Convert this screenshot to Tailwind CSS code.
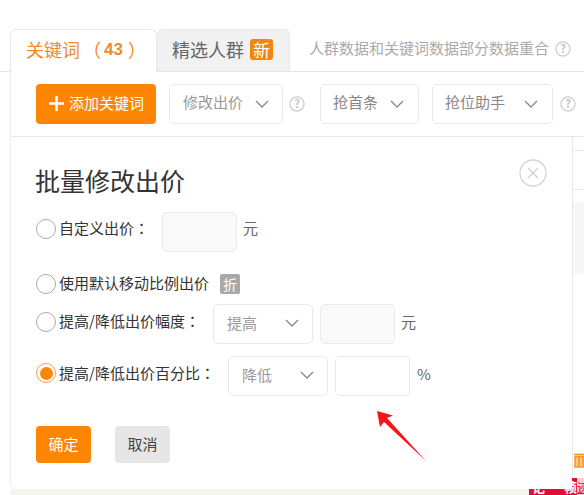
<!DOCTYPE html>
<html>
<head>
<meta charset="utf-8">
<script src="https://cdn.jsdelivr.net/npm/@tailwindcss/browser@4"></script>
</head>
<body class="bg-white">
<div class="relative w-[584px] h-[495px] overflow-hidden bg-white font-['Noto_Sans_CJK_SC','Liberation_Sans',sans-serif] text-[15px] text-[#333]">

    <!-- tabs -->
    <div class="flex items-stretch h-[72px] pt-[29px] pl-[10px] border-b border-[#e4e4e4]">
        <div class="w-[147px] h-[43px] -mb-px flex items-center pl-[15px] pb-[3px] bg-white border border-b-0 border-[#e8e8e8] rounded-t-[6px] text-[18px] text-[#f08a28] whitespace-nowrap">关键词<span class="ml-[3px]">（</span><span class="font-['Liberation_Sans'] font-bold ml-[3px] text-[17px]">43</span><span class="ml-[5px]">）</span></div>
        <div class="w-[133px] flex items-center pl-[15px] pb-[2px] bg-[#f1f1f1] border-t border-r border-[#e8e8e8] rounded-t-[6px] text-[18px] text-[#666]">
            精选人群
            <span class="ml-[6px] w-[23px] h-[21px] flex items-center justify-center rounded-[3px] bg-[#f5860b] text-white text-[17px] leading-none">新</span>
        </div>
        <div class="flex items-center gap-[6px] pl-[19px] pb-[3px] text-[#aaa] whitespace-nowrap">
            人群数据和关键词数据部分数据重合
            <svg class="w-[16px] h-[16px] shrink-0" viewBox="0 0 16 16"><circle cx="8" cy="8" r="7" fill="none" stroke="#d2d2d2" stroke-width="1.5"/><text x="8" y="12" text-anchor="middle" font-size="11" fill="#c4c4c4" font-weight="700">?</text></svg>
        </div>
    </div>

    <!-- toolbar -->
    <div class="flex items-center h-[65px] ml-[10px] pl-[25px] border-l border-[#eee] border-b border-b-[#e8e8e8]">
        <button class="w-[120px] h-[40px] flex items-center justify-center gap-[5px] pb-[1px] pl-[1px] rounded-[4px] bg-[#ff8605] text-white">
            <svg class="w-[15px] h-[15px]" viewBox="0 0 14 14"><path d="M5.8 0h2.4v5.8H14v2.4H8.2V14H5.8V8.2H0V5.8h5.8z" fill="#fff"/></svg>
            添加关键词
        </button>
        <div class="ml-[13px] w-[114px] h-[40px] flex items-center justify-between pl-[13px] pr-[13px] pb-[3px] border border-[#e8e8e8] rounded-[5px] text-[#999]">
            修改出价
            <svg class="w-[14px] h-[8px] mt-[3px]" viewBox="0 0 14 8"><path d="M1 1l6 6 6-6" fill="none" stroke="#888" stroke-width="1.3"/></svg>
        </div>
        <svg class="ml-[6px] w-[16px] h-[16px]" viewBox="0 0 16 16"><circle cx="8" cy="8" r="7" fill="none" stroke="#d2d2d2" stroke-width="1.5"/><text x="8" y="12" text-anchor="middle" font-size="11" fill="#c4c4c4" font-weight="700">?</text></svg>
        <div class="ml-[15px] w-[99px] h-[40px] flex items-center justify-between pl-[12px] pr-[14px] pb-[3px] border border-[#e8e8e8] rounded-[5px] text-[#888]">
            抢首条
            <svg class="w-[14px] h-[8px] mt-[3px]" viewBox="0 0 14 8"><path d="M1 1l6 6 6-6" fill="none" stroke="#888" stroke-width="1.3"/></svg>
        </div>
        <div class="ml-[13px] w-[121px] h-[40px] flex items-center justify-between pl-[12px] pr-[14px] pb-[3px] border border-[#e8e8e8] rounded-[5px] text-[#888]">
            抢位助手
            <svg class="w-[14px] h-[8px] mt-[3px]" viewBox="0 0 14 8"><path d="M1 1l6 6 6-6" fill="none" stroke="#888" stroke-width="1.3"/></svg>
        </div>
        <svg class="ml-[7px] w-[16px] h-[16px]" viewBox="0 0 16 16"><circle cx="8" cy="8" r="7" fill="none" stroke="#d2d2d2" stroke-width="1.5"/><text x="8" y="12" text-anchor="middle" font-size="11" fill="#c4c4c4" font-weight="700">?</text></svg>
    </div>

    <!-- table behind the dialog -->
    <div class="absolute left-[572px] top-[150px] w-[12px] h-px bg-[#e8e8e8]"></div>
    <div class="absolute left-[572px] top-[189px] w-[12px] h-px bg-[#e8e8e8]"></div>
    <div class="absolute left-[573px] top-[202px] w-[11px] h-[72px] bg-[#f7f7f7]"></div>
    <div class="absolute left-[572px] top-[137px] w-px h-[352px] bg-[#e8e8e8]"></div>
    <svg class="absolute left-[574px] top-[452px] w-[14px] h-[16px]" viewBox="0 0 14 16"><path d="M0 2.5h14" fill="none" stroke="#f5921e" stroke-width="1.6"/><path d="M1 4.5h12V15H1z" fill="#fbc88a" stroke="#f5921e" stroke-width="1.4"/><path d="M5 5v9M9 5v9" stroke="#f5921e" stroke-width="1.5"/></svg>
    <div class="absolute left-[529px] top-[478px] w-[55px] h-[17px] bg-[#e8093a] flex items-start justify-between pl-[3px] text-white text-[13px] leading-[17px] font-bold overflow-hidden whitespace-nowrap">
        <span>记 · 帧</span><span class="bg-white/80 text-[#e8093a] font-normal underline">迹</span>
    </div>
    <div class="absolute left-[10px] top-[489px] w-[519px] h-[6px] bg-[#f7f3ee]"></div>

    <!-- dialog -->
    <div class="absolute left-[10px] top-[137px] w-[562px] h-[352px] bg-white border-l border-[#eee] rounded-bl-[6px] rounded-tr-[8px] pl-[25px] pt-[26px] text-[#333]">
        <div class="text-[25px] leading-[34px] -ml-px text-[#333]">批量修改出价</div>

        <button class="absolute left-[508px] top-[22px] w-[28px] h-[28px]">
            <svg class="w-[28px] h-[28px]" viewBox="0 0 28 28"><circle cx="14" cy="14" r="13" fill="none" stroke="#d4d4d4" stroke-width="1.3"/><path d="M9 9l10 10M19 9L9 19" stroke="#cfcfcf" stroke-width="1.2"/></svg>
        </button>

        <div class="flex items-center h-[40px] mt-[15px]">
            <span class="w-[20px] h-[20px] mb-[6px] rounded-full border border-[#aaa]"></span>
            <span class="ml-[3px] w-[103px] mb-[7px]">自定义出价<span class="font-['Noto_Sans_CJK_TC']">：</span></span>
            <span class="w-[75px] h-[40px] rounded-[5px] border border-[#eaeaea] bg-[#f9f9f9]"></span>
            <span class="ml-[6px] mb-[7px] text-[#666]">元</span>
        </div>

        <div class="flex items-center h-[20px] mt-[22px]">
            <span class="w-[20px] h-[20px] rounded-full border border-[#aaa]"></span>
            <span class="ml-[3px] mb-[2px]">使用默认移动比例出价</span>
            <span class="ml-[11px] w-[20px] h-[20px] flex items-center justify-center rounded-[2px] bg-[#a8a8a8] text-white text-[14px]">折</span>
        </div>

        <div class="flex items-center h-[40px] mt-[10px]">
            <span class="w-[20px] h-[20px] mb-[4px] rounded-full border border-[#aaa]"></span>
            <span class="ml-[3px] w-[154px] mb-[5px]">提高/降低出价幅度<span class="font-['Noto_Sans_CJK_TC']">：</span></span>
            <div class="w-[100px] h-[40px] flex items-center justify-between pl-[13px] pr-[13px] pb-[2px] border border-[#eaeaea] rounded-[5px] text-[#999]">
                提高
                <svg class="w-[14px] h-[8px]" viewBox="0 0 14 8"><path d="M1 1l6 6 6-6" fill="none" stroke="#888" stroke-width="1.3"/></svg>
            </div>
            <span class="ml-[7px] w-[75px] h-[40px] rounded-[5px] border border-[#eaeaea] bg-[#f9f9f9]"></span>
            <span class="ml-[6px] mb-[3px] text-[#666]">元</span>
        </div>

        <div class="flex items-center h-[40px] mt-[12px]">
            <span class="w-[20px] h-[20px] mb-[6px] rounded-full border border-[#f5a04a] flex items-center justify-center">
                <span class="w-[13px] h-[13px] rounded-full bg-[#ff8605]"></span>
            </span>
            <span class="ml-[3px] w-[169px] mb-[5px]">提高/降低出价百分比<span class="font-['Noto_Sans_CJK_TC']">：</span></span>
            <div class="w-[100px] h-[40px] flex items-center justify-between pl-[13px] pr-[13px] pb-[2px] border border-[#eaeaea] rounded-[5px] text-[#999]">
                降低
                <svg class="w-[14px] h-[8px]" viewBox="0 0 14 8"><path d="M1 1l6 6 6-6" fill="none" stroke="#888" stroke-width="1.3"/></svg>
            </div>
            <span class="ml-[7px] w-[75px] h-[40px] rounded-[5px] border border-[#eaeaea] bg-white"></span>
            <span class="ml-[7px] mb-[4px] text-[#666]">%</span>
        </div>

        <div class="flex items-center gap-[24px] mt-[30px]">
            <button class="w-[55px] h-[37px] rounded-[4px] bg-[#ff8605] text-white">确定</button>
            <button class="w-[55px] h-[37px] rounded-[4px] bg-[#e6e6e6] text-[#444]">取消</button>
        </div>
    </div>

    <!-- red annotation arrow -->
    <svg class="absolute left-0 top-0 w-[584px] h-[495px] pointer-events-none" viewBox="0 0 584 495"><polygon points="377,411 393,415.5 387,418 426,461 384,422 380,427" fill="#f5141a"/></svg>
</div>
</body>
</html>
